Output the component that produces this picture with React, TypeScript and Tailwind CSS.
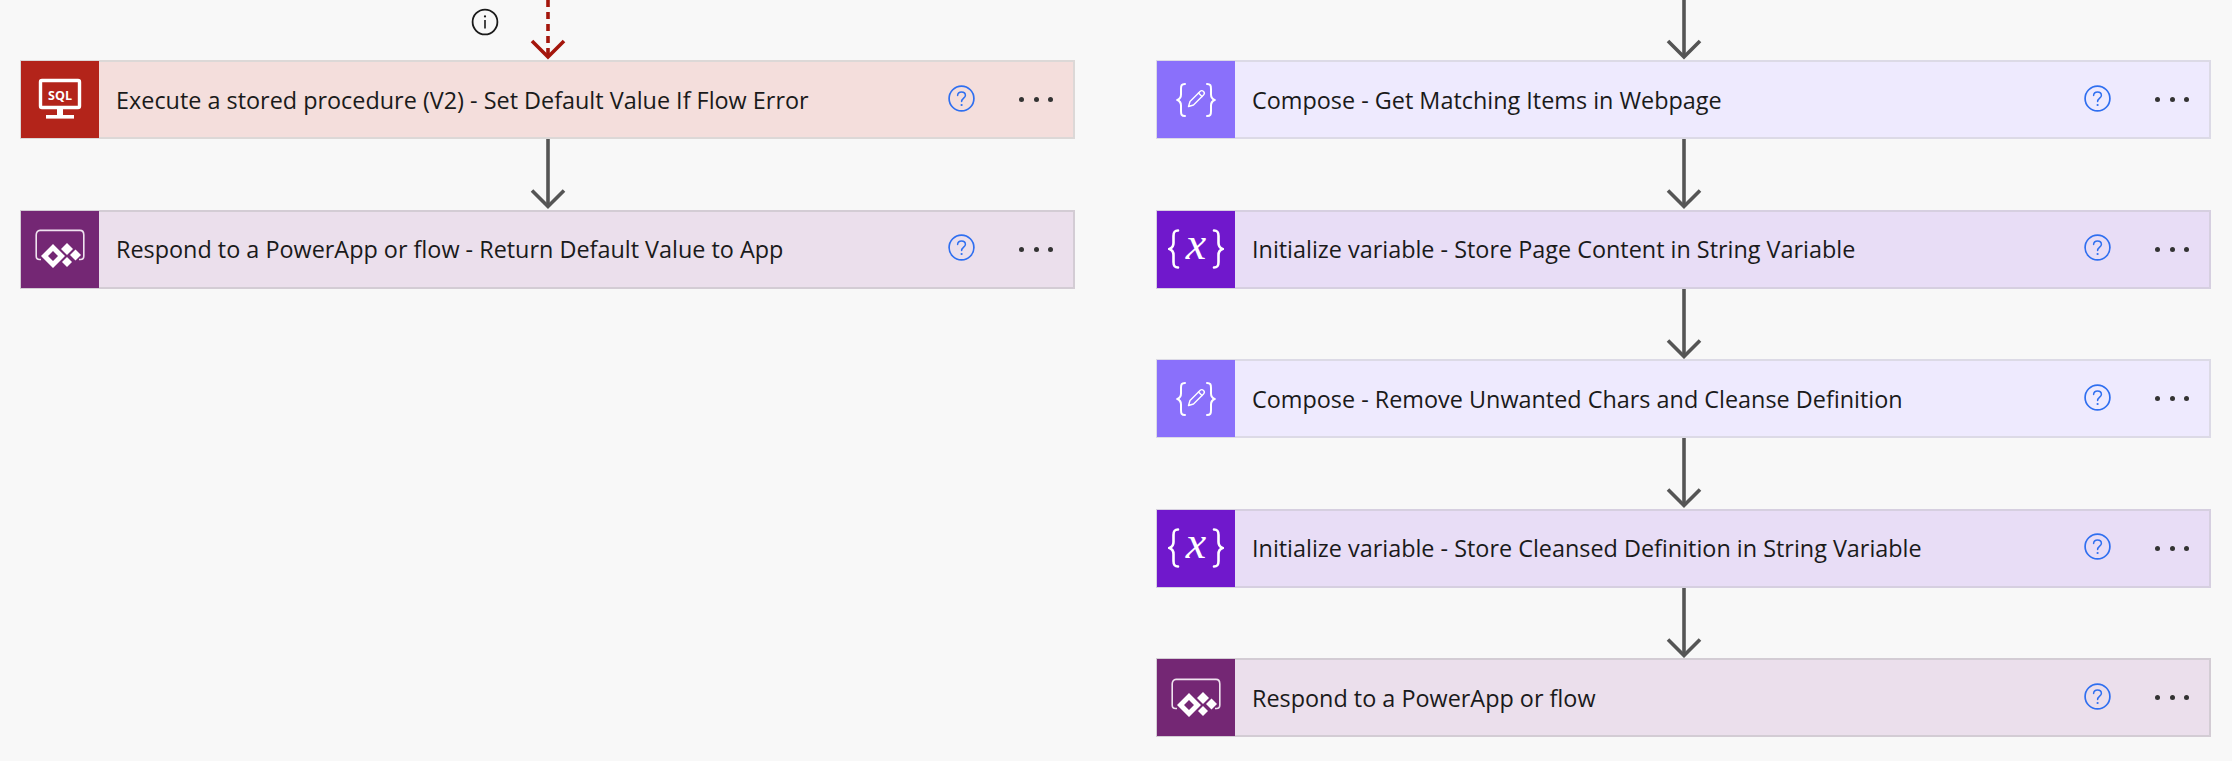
type Kind = "sql" | "app" | "compose" | "variable";

const kinds: Record<Kind, { card: string; tile: string }> = {
  sql: { card: "bg-[#f4dedc] border-[#dcd8d7]", tile: "bg-[#b3241a]" },
  app: { card: "bg-[#ebdfec] border-[#d3ccd4]", tile: "bg-[#742774]" },
  compose: { card: "bg-[#eeeafe] border-[#dcdae6]", tile: "bg-[#8a70fb]" },
  variable: { card: "bg-[#e8ddf6] border-[#d6cfe0]", tile: "bg-[#7018cc]" },
};

const leftSteps: { kind: Kind; title: string }[] = [
  { kind: "sql", title: "Execute a stored procedure (V2) - Set Default Value If Flow Error" },
  { kind: "app", title: "Respond to a PowerApp or flow - Return Default Value to App" },
];

const rightSteps: { kind: Kind; title: string }[] = [
  { kind: "compose", title: "Compose - Get Matching Items in Webpage" },
  { kind: "variable", title: "Initialize variable - Store Page Content in String Variable" },
  { kind: "compose", title: "Compose - Remove Unwanted Chars and Cleanse Definition" },
  { kind: "variable", title: "Initialize variable - Store Cleansed Definition in String Variable" },
  { kind: "app", title: "Respond to a PowerApp or flow" },
];

function SqlIcon() {
  return (
    <svg width="44" height="44" viewBox="0 0 44 44" fill="none">
      <rect x="2.5" y="2.5" width="39" height="27" rx="1.5" stroke="white" strokeWidth="3.4" />
      <rect x="19" y="30" width="6" height="7" fill="white" />
      <rect x="8" y="37" width="28" height="3.6" fill="white" />
      <text x="22" y="21.5" textAnchor="middle" fill="white" fontSize="12.5" fontWeight="700" fontFamily="'Open Sans', sans-serif">
        SQL
      </text>
    </svg>
  );
}

function AppIcon() {
  return (
    <svg width="50" height="40" viewBox="0 0 50 40" fill="none">
      <path
        d="M6 30.5H4.5C2.6 30.5 1.2 29.2 1.2 27V6C1.2 3.2 2.6 1.4 5 1.4H45C47.4 1.4 48.8 3.2 48.8 6V27C48.8 29.2 47.4 30.5 45.5 30.5H44"
        stroke="#efe3ef"
        strokeWidth="1.6"
      />
      <path fillRule="evenodd" fill="white" d="M18 15L30 27L18 39L6 27ZM18 22L13 27L18 32L23 27Z" />
      <path fill="white" d="M32 14L38 20L32 26L26 20Z" />
      <path fill="white" d="M40.5 20.5L46 26L40.5 31.5L35 26Z" />
      <path fill="white" d="M32 28L37 33L32 38L27 33Z" />
    </svg>
  );
}

function ComposeIcon() {
  return (
    <svg width="40" height="36" viewBox="0 0 40 36" fill="none" stroke="white" strokeLinecap="round">
      <path strokeWidth="2" d="M9 2C5.5 2 5 3.5 5 7V12.5C5 15 3.5 17 1.5 18C3.5 19 5 21 5 23.5V29C5 32.5 5.5 34 9 34" />
      <path strokeWidth="2" d="M31 2C34.5 2 35 3.5 35 7V12.5C35 15 36.5 17 38.5 18C36.5 19 35 21 35 23.5V29C35 32.5 34.5 34 31 34" />
      <path strokeWidth="1.4" strokeLinejoin="round" d="M12.5 24.5L14 19.5L24 9.5C25 8.5 26.5 8.5 27.5 9.5C28.5 10.5 28.5 12 27.5 13L17.5 23Z" />
      <path strokeWidth="1.4" d="M22.5 11L26 14.5" />
    </svg>
  );
}

function VariableIcon() {
  return (
    <svg width="56" height="64" viewBox="0 -12 56 64" fill="none">
      <path stroke="white" strokeWidth="2.6" strokeLinecap="round" d="M10 1.5C6 1.5 5.5 3.5 5.5 7V14C5.5 17 4 19 1.5 20C4 21 5.5 23 5.5 26V33C5.5 36.5 6 38.5 10 38.5" />
      <path stroke="white" strokeWidth="2.6" strokeLinecap="round" d="M46 1.5C50 1.5 50.5 3.5 50.5 7V14C50.5 17 52 19 54.5 20C52 21 50.5 23 50.5 26V33C50.5 36.5 50 38.5 46 38.5" />
      <text x="28" y="30" textAnchor="middle" fill="white" fontSize="46" fontStyle="italic" fontFamily="'Liberation Serif', serif">
        x
      </text>
    </svg>
  );
}

const icons: Record<Kind, () => React.ReactElement> = {
  sql: SqlIcon,
  app: AppIcon,
  compose: ComposeIcon,
  variable: VariableIcon,
};

function HelpIcon() {
  return (
    <svg className="mb-[3px]" width="27" height="27" viewBox="0 0 27 27" fill="none">
      <circle cx="13.5" cy="13.5" r="12.4" stroke="#2f6ff0" strokeWidth="1.7" />
      <path d="M9.6 10.4C9.8 8.2 11.4 7 13.5 7C15.8 7 17.4 8.4 17.4 10.4C17.4 13 13.6 13.4 13.6 16.6" stroke="#2f6ff0" strokeWidth="1.5" strokeLinecap="round" />
      <circle cx="13.6" cy="20" r="1.1" fill="#2f6ff0" />
    </svg>
  );
}

function Step({ kind, title }: { kind: Kind; title: string }) {
  const Icon = icons[kind];
  return (
    <div className={`flex h-[79px] items-center border-2 ${kinds[kind].card}`}>
      <div className={`flex h-[77px] w-[78px] shrink-0 -ml-[1px] items-center justify-center ${kinds[kind].tile}`}>
        <Icon />
      </div>
      <span className="ml-[17px] flex-1 pt-[2px] text-[23.4px] whitespace-nowrap text-[#1a1a1a]">{title}</span>
      <div className="flex w-[125px] shrink-0 items-center">
        <HelpIcon />
        <div className="ml-[44px] flex items-center gap-[9.7px]">
          <span className="h-[5px] w-[5px] rounded-full bg-[#333333]" />
          <span className="h-[5px] w-[5px] rounded-full bg-[#333333]" />
          <span className="h-[5px] w-[5px] rounded-full bg-[#333333]" />
        </div>
      </div>
    </div>
  );
}

function Arrow({ height, color = "#555555", dashed = false }: { height: number; color?: string; dashed?: boolean }) {
  return (
    <div className="flex justify-center">
      <svg width="36" height={height} viewBox={`0 0 36 ${height}`} fill="none">
        <path d={`M18 0V${height - 3}`} stroke={color} strokeWidth="3.6" strokeDasharray={dashed ? "7 5" : undefined} />
        <path d={`M2 ${height - 19}L18 ${height - 3}L34 ${height - 19}`} stroke={color} strokeWidth="3.6" />
      </svg>
    </div>
  );
}

function Column({ steps, dashedTop = false }: { steps: { kind: Kind; title: string }[]; dashedTop?: boolean }) {
  return (
    <div className="flex w-[1055px] flex-col">
      {dashedTop ? <Arrow height={60} color="#a4160c" dashed /> : <Arrow height={60} />}
      {steps.map((step, i) => (
        <div key={step.title}>
          {i > 0 && <Arrow height={70.5} />}
          <Step kind={step.kind} title={step.title} />
        </div>
      ))}
    </div>
  );
}

export default function App() {
  return (
    <div className="relative flex h-[761px] w-[2232px] gap-[81px] overflow-hidden bg-[#f8f8f8] pl-[20px] font-['Open_Sans',sans-serif]">
      <Column steps={leftSteps} dashedTop />
      <Column steps={rightSteps} />
      <svg className="absolute left-[471px] top-[8px]" width="28" height="28" viewBox="0 0 28 28" fill="none">
        <circle cx="14" cy="14" r="12.4" stroke="#1a1a1a" strokeWidth="1.8" />
        <path d="M14 12V20.5" stroke="#1a1a1a" strokeWidth="1.6" />
        <circle cx="14" cy="8.4" r="1.1" fill="#1a1a1a" />
      </svg>
    </div>
  );
}
